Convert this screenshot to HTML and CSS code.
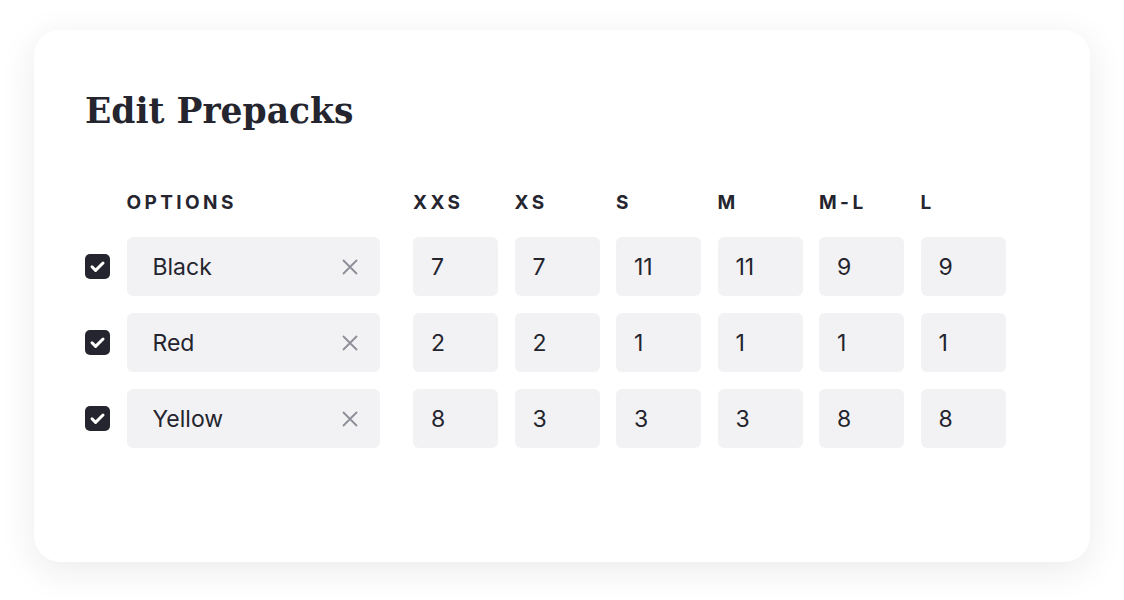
FILE: index.html
```html
<!DOCTYPE html>
<html lang="en">
<head>
    <meta charset="UTF-8">
    <meta name="viewport" content="width=device-width, initial-scale=1.0">
    <link rel="stylesheet" href="styles.css">
    <title>Edit Prepacks</title>
</head>
<body>

    <div class="card">
        <h1 class="title">Edit Prepacks</h1>

        <div class="grid">
            <!-- header row -->
            <span></span>
            <span class="head head-options">OPTIONS</span>
            <span class="head">XXS</span>
            <span class="head">XS</span>
            <span class="head">S</span>
            <span class="head">M</span>
            <span class="head">M-L</span>
            <span class="head">L</span>

            <!-- Black -->
            <span class="check"><svg viewBox="0 0 25 25" width="25" height="25"><rect width="25" height="25" rx="5" fill="#25252f"/><path d="M7 12.8l3.6 3.6 7.4-7.4" fill="none" stroke="#fff" stroke-width="3" stroke-linecap="round" stroke-linejoin="round"/></svg></span>
            <div class="option"><span>Black</span><svg class="remove" viewBox="0 0 16 16" width="16" height="16"><path d="M1 1l14 14M15 1L1 15" stroke="#8e8e99" stroke-width="1.8"/></svg></div>
            <div class="qty">7</div>
            <div class="qty">7</div>
            <div class="qty">11</div>
            <div class="qty">11</div>
            <div class="qty">9</div>
            <div class="qty">9</div>

            <!-- Red -->
            <span class="check"><svg viewBox="0 0 25 25" width="25" height="25"><rect width="25" height="25" rx="5" fill="#25252f"/><path d="M7 12.8l3.6 3.6 7.4-7.4" fill="none" stroke="#fff" stroke-width="3" stroke-linecap="round" stroke-linejoin="round"/></svg></span>
            <div class="option"><span>Red</span><svg class="remove" viewBox="0 0 16 16" width="16" height="16"><path d="M1 1l14 14M15 1L1 15" stroke="#8e8e99" stroke-width="1.8"/></svg></div>
            <div class="qty">2</div>
            <div class="qty">2</div>
            <div class="qty">1</div>
            <div class="qty">1</div>
            <div class="qty">1</div>
            <div class="qty">1</div>

            <!-- Yellow -->
            <span class="check"><svg viewBox="0 0 25 25" width="25" height="25"><rect width="25" height="25" rx="5" fill="#25252f"/><path d="M7 12.8l3.6 3.6 7.4-7.4" fill="none" stroke="#fff" stroke-width="3" stroke-linecap="round" stroke-linejoin="round"/></svg></span>
            <div class="option"><span>Yellow</span><svg class="remove" viewBox="0 0 16 16" width="16" height="16"><path d="M1 1l14 14M15 1L1 15" stroke="#8e8e99" stroke-width="1.8"/></svg></div>
            <div class="qty">8</div>
            <div class="qty">3</div>
            <div class="qty">3</div>
            <div class="qty">3</div>
            <div class="qty">8</div>
            <div class="qty">8</div>
        </div>
    </div>

</body>
</html>
```

FILE: styles.css
```css
body {
    margin: 0;
    padding: 30px 0 38px 34px;
    background: #ffffff;
    font-family: Inter, "Liberation Sans", sans-serif;
    color: #24242e;
}

.card {
    box-sizing: border-box;
    width: 1056px;
    height: 532px;
    padding: 60px 0 0 51px;
    background: #ffffff;
    border-radius: 26px;
    box-shadow: 0 8px 36px rgba(30, 30, 60, 0.09);
}

.title {
    margin: 0;
    font-family: "DejaVu Serif", serif;
    font-weight: bold;
    font-size: 34.5px;
    line-height: 42px;
    color: #25252f;
}

.grid {
    display: grid;
    grid-template-columns: 25px 270px repeat(6, 85px);
    grid-template-rows: 28px repeat(3, 59px);
    column-gap: 16.5px;
    row-gap: 17px;
    align-items: center;
    margin-top: 60px;
}

.head {
    font-size: 19px;
    line-height: 22px;
    font-weight: 700;
    letter-spacing: 3.4px;
    color: #25252f;
    align-self: start;
}

.check {
    display: flex;
}

.option {
    box-sizing: border-box;
    width: 253px;
    height: 59px;
    padding: 0 22px 0 26px;
    display: flex;
    align-items: center;
    justify-content: space-between;
    background: #f2f2f4;
    border-radius: 6px;
    font-size: 23px;
}

.qty {
    box-sizing: border-box;
    height: 59px;
    padding-left: 18px;
    display: flex;
    align-items: center;
    background: #f2f2f4;
    border-radius: 6px;
    font-size: 23px;
}
```
